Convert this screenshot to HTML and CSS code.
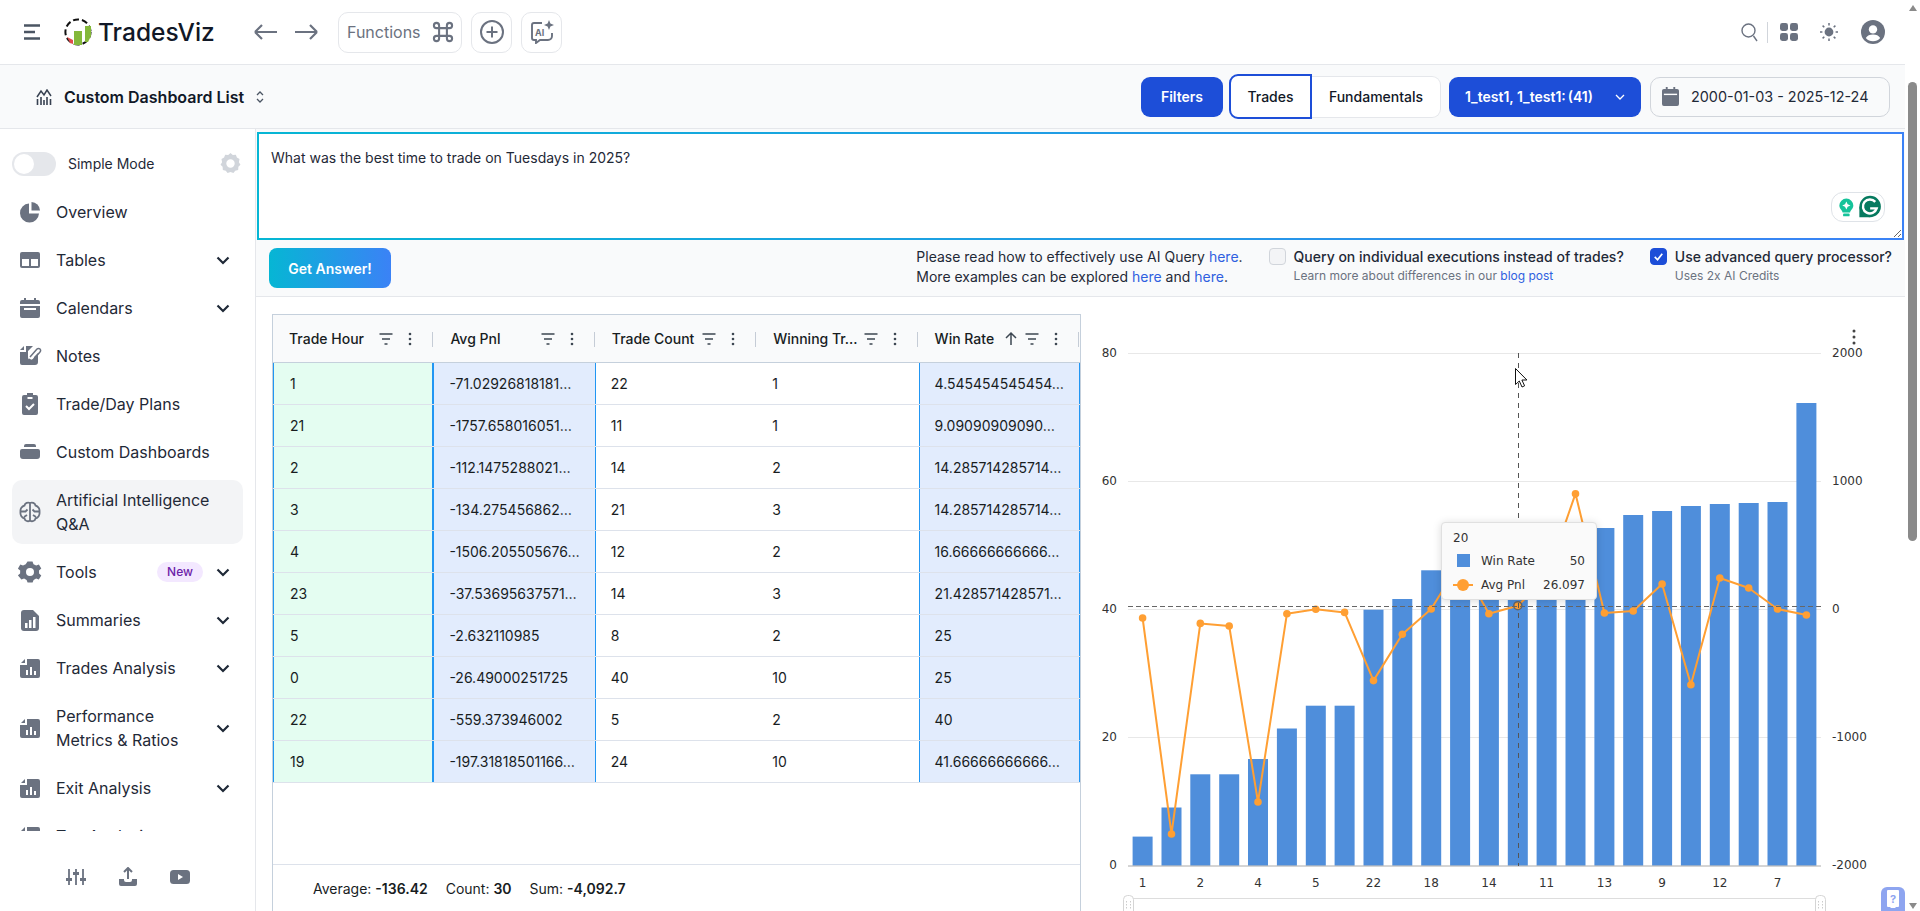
FILE: index.html
```html
<!DOCTYPE html>
<html lang="en">
<head>
<meta charset="utf-8">
<title>TradesViz</title>
<link rel="stylesheet" href="styles.css">
</head>
<body>
<svg class="defs" width="0" height="0" aria-hidden="true">
  <symbol id="i-bars" viewBox="0 0 24 24"><path fill="#6b7280" d="M3 7l4-4v4zM9 3h11a2 2 0 0 1 2 2v15a2 2 0 0 1-2 2H4a2 2 0 0 1-2-2V9h7z"/><path fill="#fff" d="M8 14h2v5H8zM12 11h2v8h-2zM16 15h2v4h-2z"/></symbol>
  <symbol id="i-chev" viewBox="0 0 16 16"><path d="M2.5 5.5L8 11l5.5-5.5" fill="none" stroke="#1f2937" stroke-width="2.2"/></symbol>
  <symbol id="i-filter" viewBox="0 0 16 16"><path d="M1.5 3h13M4 8h8M6.5 13h3" fill="none" stroke="#3d4752" stroke-width="1.7"/></symbol>
  <symbol id="i-dots" viewBox="0 0 16 16"><circle cx="8" cy="3" r="1.3" fill="#3d4752"/><circle cx="8" cy="8" r="1.3" fill="#3d4752"/><circle cx="8" cy="13" r="1.3" fill="#3d4752"/></symbol>
</svg>

<div class="page">
  <div class="main">
    <header class="topbar">
      <svg class="burger" viewBox="0 0 16 16"><path d="M0 1.5h16M0 8h11M0 14.5h16" fill="none" stroke="#4b5563" stroke-width="2.4"/></svg>
      <div class="logo">
        <svg class="logo-mark" viewBox="0 0 28 28">
          <circle cx="14" cy="14" r="12.6" fill="none" stroke="#111" stroke-width="2" stroke-dasharray="6 3"/>
          <path fill="#e14b4b" d="M3 19l6 3v4l-3-1z"/>
          <path fill="#84b83a" d="M10 13h8v14h-8z"/>
          <path fill="#84b83a" d="M21 8h6v10l-3 6h-3z"/>
        </svg>
        <span class="logo-text">TradesViz</span>
      </div>
      <svg class="arrow" viewBox="0 0 24 16"><path d="M1 8h22M1 8l7-7M1 8l7 7" fill="none" stroke="#6b7280" stroke-width="2.2"/></svg>
      <svg class="arrow arrow-r" viewBox="0 0 24 16"><path d="M1 8h22M23 8l-7-7M23 8l-7 7" fill="none" stroke="#6b7280" stroke-width="2.2"/></svg>
      <div class="tbtn tbtn-fn">
        <span>Functions</span>
        <svg class="ic24" viewBox="0 0 24 24"><path d="M7 9a2 2 0 1 1 2-2v10a2 2 0 1 1-2-2h10a2 2 0 1 1-2 2V7a2 2 0 1 1 2 2H7" transform="translate(-3.6 -3.6) scale(1.3)" fill="none" stroke="#6b7280" stroke-width="1.6"/></svg>
      </div>
      <div class="tbtn tbtn-sq">
        <svg class="ic24" viewBox="0 0 24 24"><circle cx="12" cy="12" r="11" fill="none" stroke="#6b7280" stroke-width="2"/><path d="M12 6.5v11M6.5 12h11" stroke="#6b7280" stroke-width="2"/></svg>
      </div>
      <div class="tbtn tbtn-sq">
        <svg class="ic24" viewBox="0 0 24 24"><path d="M12 3H4a2 2 0 0 0-2 2v13a2 2 0 0 0 2 2h2v3l4-3h8a4 4 0 0 0 4-4v-3" fill="none" stroke="#6b7280" stroke-width="1.9"/><path fill="#6b7280" d="M19 0l1.4 3.6L24 5l-3.6 1.4L19 10l-1.4-3.6L14 5l3.6-1.4z"/><text x="5" y="15.5" class="ai-text">AI</text></svg>
      </div>
      <div class="top-right">
        <svg class="ic-search" viewBox="0 0 17 19"><circle cx="7.5" cy="7.5" r="6.5" fill="none" stroke="#6b7280" stroke-width="1.4"/><path d="M12.5 13l3.5 5" stroke="#6b7280" stroke-width="1.4"/></svg>
        <span class="divider"></span>
        <svg class="ic-grid" viewBox="0 0 18 18"><rect width="8" height="8" rx="2.4" fill="#6b7280"/><rect x="10" width="8" height="8" rx="2.4" fill="#6b7280"/><rect y="10" width="8" height="8" rx="2.4" fill="#6b7280"/><rect x="10" y="10" width="8" height="8" rx="2.4" fill="#6b7280"/></svg>
        <svg class="ic-sun" viewBox="0 0 18 18"><circle cx="9" cy="9" r="4.4" fill="#6b7280"/><path d="M9 0v2.4M9 15.6V18M0 9h2.4M15.6 9H18M2.6 2.6l1.7 1.7M13.7 13.7l1.7 1.7M2.6 15.4l1.7-1.7M13.7 4.3l1.7-1.7" stroke="#6b7280" stroke-width="1.5"/></svg>
        <svg class="ic-user" viewBox="0 0 24 24"><circle cx="12" cy="12" r="12" fill="#6b7280"/><circle cx="12" cy="9.4" r="4.2" fill="#fff"/><path fill="#fff" d="M4.8 18c1.4-2.6 4-3.6 7.2-3.6s5.800 1 7.200 3.600c-1.800 2.100-4.400 3.300-7.200 3.300s-5.400-1.200-7.200-3.300z"/></svg>
      </div>
    </header>

    <div class="subbar">
      <svg class="ic-dash" viewBox="0 0 16 16"><path d="M1 8l4-6 3 4 3-5 4 6" fill="none" stroke="#374151" stroke-width="1.5"/><path d="M1.500 10v6M5 8v8M8 11v5M11 8v8M14.500 10v6" stroke="#374151" stroke-width="1.600"/></svg>
      <span class="dash-title">Custom Dashboard List</span>
      <svg class="ic-updown" viewBox="0 0 8 14"><path d="M1 5l3-3 3 3M1 9l3 3 3-3" fill="none" stroke="#4b5563" stroke-width="1.300"/></svg>
      <div class="sub-right">
        <button class="btn-blue btn-filters">Filters</button>
        <div class="seg">
          <span class="seg-on">Trades</span>
          <span class="seg-off">Fundamentals</span>
        </div>
        <button class="btn-blue btn-acct">
          <span class="acct-names">1_test1, 1_test1:</span>
          <span>(41)</span>
          <svg class="ic-acct-chev" viewBox="0 0 12 12"><path d="M2 4l4 4 4-4" fill="none" stroke="#fff" stroke-width="1.300"/></svg>
        </button>
        <div class="date">
          <svg class="ic-cal" viewBox="0 0 18 20"><path fill="#6b7280" d="M2 2h2V0h2v2h6V0h2v2h2a2 2 0 0 1 2 2v14a2 2 0 0 1-2 2H2a2 2 0 0 1-2-2V4a2 2 0 0 1 2-2z"/><path fill="#fff" d="M2 7h14v1.500H2z"/></svg>
          <span>2000-01-03 - 2025-12-24</span>
        </div>
      </div>
    </div>

    <div class="body">
      <aside class="side">
        <div class="simple">
          <span class="toggle"><span class="knob"></span></span>
          <span class="simple-label">Simple Mode</span>
          <svg class="ic-gear-light" viewBox="0 0 20 20"><path fill-rule="evenodd" fill="#d1d5db" d="M10 0l2.200 1.900 2.900-.3 1 2.700 2.500 1.500-.6 2.900 1.500 2.400-2 2.100-.2 2.900-2.800.8L12.800 19l-2.800-1-2.800 1-1.700-2.100-2.800-.8-.2-2.900-2-2.100 1.500-2.400-.6-2.900 2.500-1.500 1-2.700 2.900.3zM10 6a4 4 0 1 0 0 8 4 4 0 0 0 0-8z"/></svg>
        </div>
        <nav class="nav">
          <a class="item"><svg class="nav-ic" viewBox="0 0 24 24"><path fill="#6b7280" d="M11 3.500a9.500 9.500 0 1 0 10 10H11z"/><path fill="#6b7280" d="M13.500 2v8.500H22A9 9 0 0 0 13.500 2z"/></svg><span class="label">Overview</span></a>
          <a class="item"><svg class="nav-ic" viewBox="0 0 24 24"><rect x="2" y="4" width="20" height="16" rx="2" fill="#6b7280"/><rect x="4" y="11" width="7" height="7" fill="#fff"/><rect x="13" y="11" width="7" height="7" fill="#fff"/></svg><span class="label">Tables</span><svg class="chev"><use href="#i-chev"/></svg></a>
          <a class="item"><svg class="nav-ic" viewBox="0 0 24 24"><path fill="#6b7280" d="M4 4h2V2h2v2h8V2h2v2h2a2 2 0 0 1 2 2v2H2V6a2 2 0 0 1 2-2zM2 10h20v10a2 2 0 0 1-2 2H4a2 2 0 0 1-2-2z"/><rect x="6" y="12" width="12" height="2" fill="#fff"/></svg><span class="label">Calendars</span><svg class="chev"><use href="#i-chev"/></svg></a>
          <a class="item"><svg class="nav-ic" viewBox="0 0 24 24"><path fill="#6b7280" d="M2 6l4-4v4zM8 2h7l-5 5v6a3 3 0 0 0 6 0l4-4v9a3 3 0 0 1-3 3H4a2 2 0 0 1-2-2V8h6z"/><path d="M12 13l7-8a2 2 0 0 1 3 3l-7 8a3 3 0 0 1-4-1" fill="none" stroke="#6b7280" stroke-width="1.500"/></svg><span class="label">Notes</span></a>
          <a class="item"><svg class="nav-ic" viewBox="0 0 24 24"><path fill="#6b7280" d="M9 1h6v2h3a2 2 0 0 1 2 2v16a2 2 0 0 1-2 2H6a2 2 0 0 1-2-2V5a2 2 0 0 1 2-2h3z"/><rect x="9.500" y="5" width="5" height="2" fill="#fff"/><path d="M8 14l3 3 5-5" fill="none" stroke="#fff" stroke-width="2"/></svg><span class="label">Trade/Day Plans</span></a>
          <a class="item"><svg class="nav-ic" viewBox="0 0 24 24"><path fill="#6b7280" d="M6 6a2 2 0 0 1 2-2h8a2 2 0 0 1 2 2v1H6zM4 9h16a2 2 0 0 1 2 2v5a3 3 0 0 1-3 3H5a3 3 0 0 1-3-3v-5a2 2 0 0 1 2-2z"/></svg><span class="label">Custom Dashboards</span></a>
          <a class="item item-on"><svg class="nav-ic" viewBox="0 0 24 24"><path d="M12 3c-2-1-5 0-5.500 2.500C4 6 2 9 2.500 12c-.5 3 1.500 6 4 6.500C7 21 10 22 12 20.500c2 1.500 5 .5 5.500-2 2.500-.5 4.500-3.500 4-6.500.5-3-1.500-6-4-6.500C17 3 14 2 12 3zM12 3v17.500M2.500 11.500h5l2-2M21.500 11.500h-5l-2-2M6 17l3-2M18 17l-3-2" fill="none" stroke="#6b7280" stroke-width="1.800"/></svg><span class="label">Artificial Intelligence Q&amp;A</span></a>
          <a class="item"><svg class="nav-ic" viewBox="0 0 24 24"><path fill-rule="evenodd" fill="#6b7280" d="M9.500 1.500h5l1 2.800 2.700 1.100 2.700-1 2.400 4.200-2.300 2 .1 2.800 2.200 2-2.500 4.200-2.700-1-2.500 1.400-1 2.600h-5l-1-2.600-2.500-1.400-2.700 1L-.1 15.400l2.200-2 .1-2.800-2.300-2 2.400-4.200 2.700 1 2.700-1.100zM12 8a4 4 0 1 0 0 8 4 4 0 0 0 0-8z"/></svg><span class="label">Tools</span><span class="badge">New</span><svg class="chev"><use href="#i-chev"/></svg></a>
          <a class="item"><svg class="nav-ic" viewBox="0 0 24 24"><path fill="#6b7280" d="M6 2h9l6 6v12a3 3 0 0 1-3 3H6a3 3 0 0 1-3-3V5a3 3 0 0 1 3-3z"/><path fill="#fff" d="M7 15h2.500v5H7zM11 12h2.500v8H11zM15 9h2.500v11H15z"/></svg><span class="label">Summaries</span><svg class="chev"><use href="#i-chev"/></svg></a>
          <a class="item"><svg class="nav-ic"><use href="#i-bars"/></svg><span class="label">Trades Analysis</span><svg class="chev"><use href="#i-chev"/></svg></a>
          <a class="item"><svg class="nav-ic"><use href="#i-bars"/></svg><span class="label">Performance Metrics &amp; Ratios</span><svg class="chev"><use href="#i-chev"/></svg></a>
          <a class="item"><svg class="nav-ic"><use href="#i-bars"/></svg><span class="label">Exit Analysis</span><svg class="chev"><use href="#i-chev"/></svg></a>
          <a class="item"><svg class="nav-ic"><use href="#i-bars"/></svg><span class="label">Tag Analysis</span><svg class="chev"><use href="#i-chev"/></svg></a>
        </nav>
        <div class="side-foot">
          <svg class="foot-ic" viewBox="0 0 20 20"><path d="M3 2v16M10 2v16M17 2v16" stroke="#6b7280" stroke-width="1.800"/><path fill="#6b7280" d="M0 11h6v3H0zM7 5h6v3H7zM14 11h6v3h-6z"/></svg>
          <svg class="foot-ic" viewBox="0 0 20 20"><path fill="#6b7280" d="M1 12h5v1a2 2 0 0 0 2 2h4a2 2 0 0 0 2-2v-1h5v5a2 2 0 0 1-2 2H3a2 2 0 0 1-2-2z"/><path d="M10 12V2M6 5l4-4 4 4" fill="none" stroke="#6b7280" stroke-width="2"/></svg>
          <svg class="foot-ic" viewBox="0 0 20 20"><rect y="3" width="20" height="14" rx="3.500" fill="#6b7280"/><path fill="#fff" d="M8 7l5 3-5 3z"/></svg>
        </div>
      </aside>

      <section class="content">
        <div class="ask">
          <textarea class="query" spellcheck="false">What was the best time to trade on Tuesdays in 2025?</textarea>
          <div class="gram">
            <svg class="gram-ic" viewBox="0 0 54 30">
              <path fill="#15c39a" d="M14.500 6a7.500 7.500 0 0 1 7.500 7.500c0 3.500-3 4.500-3.500 7.500h-8c-.5-3-3.500-4-3.500-7.500A7.500 7.500 0 0 1 14.500 6z"/>
              <path fill="#fff" d="M14.500 9l1.400 3 3 1.400-3 1.400-1.400 3-1.400-3-3-1.400 3-1.400z"/>
              <rect x="11" y="22" width="7" height="3" rx="1" fill="#15c39a"/>
              <circle cx="40" cy="14.500" r="11.500" fill="#067a5f"/>
              <path d="M28.500 14.500V26h11.500z" fill="#067a5f"/>
              <path d="M45.500 9.500a7.500 7.500 0 1 0 1.500 7h-7" fill="none" stroke="#fff" stroke-width="2.600"/>
            </svg>
          </div>
        </div>
        <div class="actions">
          <button class="answer">Get Answer!</button>
          <div class="opts">
            <p class="help">Please read how to effectively use AI Query <a>here</a>.<br>More examples can be explored <a>here</a> and <a>here</a>.</p>
            <div class="opt">
              <span class="cb"></span>
              <div class="opt-txt">
                <div class="opt-main">Query on individual executions instead of trades?</div>
                <small>Learn more about differences in our <a>blog post</a></small>
              </div>
            </div>
            <div class="opt">
              <span class="cb cb-on"><svg viewBox="0 0 16 16"><path d="M4 8.500l3 3 5-6.500" fill="none" stroke="#fff" stroke-width="1.800"/></svg></span>
              <div class="opt-txt">
                <div class="opt-main">Use advanced query processor?</div>
                <small>Uses 2x AI Credits</small>
              </div>
            </div>
          </div>
        </div>

        <div class="result">
          <div class="grid">
            <div class="g-head">
              <div class="hc"><span class="hl">Trade Hour</span><svg class="hi"><use href="#i-filter"/></svg><svg class="hi"><use href="#i-dots"/></svg></div>
              <div class="hc"><span class="hl">Avg Pnl</span><svg class="hi"><use href="#i-filter"/></svg><svg class="hi"><use href="#i-dots"/></svg></div>
              <div class="hc"><span class="hl">Trade Count</span><svg class="hi"><use href="#i-filter"/></svg><svg class="hi"><use href="#i-dots"/></svg></div>
              <div class="hc"><span class="hl">Winning Tr…</span><svg class="hi"><use href="#i-filter"/></svg><svg class="hi"><use href="#i-dots"/></svg></div>
              <div class="hc"><span class="hl">Win Rate</span><svg class="hi hi-sort" viewBox="0 0 16 16"><path d="M8 14V2M3 7l5-5 5 5" fill="none" stroke="#3d4752" stroke-width="1.500"/></svg><svg class="hi"><use href="#i-filter"/></svg><svg class="hi"><use href="#i-dots"/></svg></div>
            </div>
            <div class="g-row"><div class="c c-g">1</div><div class="c c-b">-71.02926818181…</div><div class="c">22</div><div class="c">1</div><div class="c c-b c-l">4.545454545454…</div></div>
            <div class="g-row"><div class="c c-g">21</div><div class="c c-b">-1757.658016051…</div><div class="c">11</div><div class="c">1</div><div class="c c-b c-l">9.09090909090…</div></div>
            <div class="g-row"><div class="c c-g">2</div><div class="c c-b">-112.1475288021…</div><div class="c">14</div><div class="c">2</div><div class="c c-b c-l">14.285714285714…</div></div>
            <div class="g-row"><div class="c c-g">3</div><div class="c c-b">-134.275456862…</div><div class="c">21</div><div class="c">3</div><div class="c c-b c-l">14.285714285714…</div></div>
            <div class="g-row"><div class="c c-g">4</div><div class="c c-b">-1506.205505676…</div><div class="c">12</div><div class="c">2</div><div class="c c-b c-l">16.66666666666…</div></div>
            <div class="g-row"><div class="c c-g">23</div><div class="c c-b">-37.53695637571…</div><div class="c">14</div><div class="c">3</div><div class="c c-b c-l">21.428571428571…</div></div>
            <div class="g-row"><div class="c c-g">5</div><div class="c c-b">-2.632110985</div><div class="c">8</div><div class="c">2</div><div class="c c-b c-l">25</div></div>
            <div class="g-row"><div class="c c-g">0</div><div class="c c-b">-26.49000251725</div><div class="c">40</div><div class="c">10</div><div class="c c-b c-l">25</div></div>
            <div class="g-row"><div class="c c-g">22</div><div class="c c-b">-559.373946002</div><div class="c">5</div><div class="c">2</div><div class="c c-b c-l">40</div></div>
            <div class="g-row"><div class="c c-g">19</div><div class="c c-b">-197.31818501166…</div><div class="c">24</div><div class="c">10</div><div class="c c-b c-l">41.66666666666…</div></div>
            <div class="g-foot"><span>Average: <b>-136.42</b></span><span>Count: <b>30</b></span><span>Sum: <b>-4,092.7</b></span></div>
          </div>

          <div class="chart">
            <svg class="plot" viewBox="1082 297 823 614">
              <g class="gridlines">
                <path d="M1128 353.500H1821M1128 481.500H1821M1128 609.500H1821M1128 737.500H1821"/>
              </g>
              <g class="ylab ylab-l">
                <text x="1117" y="357">80</text><text x="1117" y="485">60</text><text x="1117" y="613">40</text><text x="1117" y="741">20</text><text x="1117" y="869">0</text>
              </g>
              <g class="ylab">
                <text x="1832" y="357">2000</text><text x="1832" y="485">1000</text><text x="1832" y="613">0</text><text x="1832" y="741">-1000</text><text x="1832" y="869">-2000</text>
              </g>
              <g class="bars">
                <rect x="1132.600" y="836.600" width="20" height="29.100"/>
                <rect x="1161.500" y="807.500" width="20" height="58.200"/>
                <rect x="1190.300" y="774.300" width="20" height="91.400"/>
                <rect x="1219.200" y="774.300" width="20" height="91.400"/>
                <rect x="1248" y="759" width="20" height="106.700"/>
                <rect x="1276.900" y="728.500" width="20" height="137.200"/>
                <rect x="1305.800" y="705.700" width="20" height="160"/>
                <rect x="1334.600" y="705.700" width="20" height="160"/>
                <rect x="1363.500" y="609.700" width="20" height="256"/>
                <rect x="1392.300" y="599" width="20" height="266.700"/>
                <rect x="1421.200" y="570.300" width="20" height="295.400"/>
                <rect x="1450.100" y="565" width="20" height="300.700"/>
                <rect x="1478.900" y="558.500" width="20" height="307.200"/>
                <rect x="1507.800" y="545.700" width="20" height="320"/>
                <rect x="1536.600" y="539" width="20" height="326.700"/>
                <rect x="1565.500" y="535" width="20" height="330.700"/>
                <rect x="1594.400" y="528" width="20" height="337.700"/>
                <rect x="1623.200" y="515" width="20" height="350.700"/>
                <rect x="1652.100" y="511" width="20" height="354.700"/>
                <rect x="1680.900" y="506" width="20" height="359.700"/>
                <rect x="1709.800" y="504" width="20" height="361.700"/>
                <rect x="1738.700" y="503" width="20" height="362.700"/>
                <rect x="1767.500" y="502" width="20" height="363.700"/>
                <rect x="1796.400" y="403" width="20" height="462.700"/>
              </g>
              <path class="axis" d="M1128 866H1821"/>
              <g class="xlab">
                <text x="1142.600" y="887">1</text><text x="1200.300" y="887">2</text><text x="1258" y="887">4</text><text x="1315.800" y="887">5</text><text x="1373.500" y="887">22</text><text x="1431.200" y="887">18</text><text x="1488.900" y="887">14</text><text x="1546.600" y="887">11</text><text x="1604.400" y="887">13</text><text x="1662.100" y="887">9</text><text x="1719.800" y="887">12</text><text x="1777.500" y="887">7</text>
              </g>
              <polyline class="line" points="1142.600,618 1171.500,834 1200.300,623.400 1229.200,626 1258,802 1286.900,613.800 1315.800,609.300 1344.600,612.400 1373.500,680.600 1402.300,634.300 1431.200,609 1460.100,562 1488.900,613.700 1517.800,605.700 1546.600,577 1575.500,493.700 1604.400,613 1633.200,611 1662.100,584 1690.900,684.700 1719.800,578 1748.700,588 1777.500,609 1806.400,615"/>
              <g class="dots">
                <circle cx="1142.600" cy="618" r="3.800"/><circle cx="1171.500" cy="834" r="3.800"/><circle cx="1200.300" cy="623.400" r="3.800"/><circle cx="1229.200" cy="626" r="3.800"/><circle cx="1258" cy="802" r="3.800"/><circle cx="1286.900" cy="613.800" r="3.800"/><circle cx="1315.800" cy="609.300" r="3.800"/><circle cx="1344.600" cy="612.400" r="3.800"/><circle cx="1373.500" cy="680.600" r="3.800"/><circle cx="1402.300" cy="634.300" r="3.800"/><circle cx="1431.200" cy="609" r="3.800"/><circle cx="1460.100" cy="562" r="3.800"/><circle cx="1488.900" cy="613.700" r="3.800"/><circle cx="1546.600" cy="577" r="3.800"/><circle cx="1575.500" cy="493.700" r="3.800"/><circle cx="1604.400" cy="613" r="3.800"/><circle cx="1633.200" cy="611" r="3.800"/><circle cx="1662.100" cy="584" r="3.800"/><circle cx="1690.900" cy="684.700" r="3.800"/><circle cx="1719.800" cy="578" r="3.800"/><circle cx="1748.700" cy="588" r="3.800"/><circle cx="1777.500" cy="609" r="3.800"/><circle cx="1806.400" cy="615" r="3.800"/>
              </g>
              <circle class="hover-dot" cx="1517.800" cy="605.700" r="4"/>
              <path class="cross-v" d="M1518.500 353V866"/>
              <path class="cross-h" d="M1128 606.500H1821"/>
              <g class="slider">
                <path d="M1128 898.500H1821"/>
                <rect x="1123.500" y="895.500" width="10" height="22" rx="4"/>
                <rect x="1815.500" y="895.500" width="10" height="22" rx="4"/>
                <path class="grip" d="M1126.500 901v8M1130.500 901v8M1818.500 901v8M1822.500 901v8"/>
              </g>
              <g class="more"><circle cx="1854" cy="331" r="1.500"/><circle cx="1854" cy="337" r="1.500"/><circle cx="1854" cy="343" r="1.500"/></g>
              <path class="cursor" d="M1515.500 368.500v16l3.800-3.500 2.700 6 2.600-1.200-2.700-5.800h5z"/>
            </svg>
            <div class="tip">
              <div class="tip-h">20</div>
              <div class="tip-r"><span class="tk tk-sq"></span><span class="tl">Win Rate</span><span class="tv">50</span></div>
              <div class="tip-r"><svg class="tk" viewBox="0 0 20 14"><path d="M0 7h20" stroke="#ff9f33" stroke-width="2"/><circle cx="10" cy="7" r="6" fill="#ff9f33"/></svg><span class="tl">Avg Pnl</span><span class="tv">26.097</span></div>
            </div>
          </div>
        </div>
      </section>
    </div>
  </div>

  <div class="scroll">
    <span class="tri-up"></span>
    <span class="thumb"></span>
    <span class="tri-down"></span>
  </div>
  <div class="helpme"><svg viewBox="0 0 12 18"><path fill="#fff" d="M1 0h10a1 1 0 0 1 1 1v15a1 1 0 0 1-1 1h-2l-1 1H4l-1-1H1a1 1 0 0 1-1-1V1a1 1 0 0 1 1-1z"/><text x="3" y="12.500" class="help-q">?</text></svg></div>
</div>
</body>
</html>
```

FILE: styles.css
```css
* { box-sizing: border-box; }
html, body { margin: 0; height: 911px; overflow: hidden; background: #fff; }
body { font-family: Inter, "Liberation Sans", sans-serif; color: #1f2937; }
.defs { position: absolute; }
p { margin: 0; }
a { color: #2f5fe0; }
button { font-family: inherit; border: 0; cursor: pointer; }

.page { display: flex; height: 911px; position: relative; }
.main { width: 1905px; flex: none; display: flex; flex-direction: column; height: 911px; }

/* top bar */
.topbar { height: 65px; border-bottom: 1px solid #e5e7eb; display: flex; align-items: center; padding-left: 24px; flex: none; }
.burger { width: 16px; height: 16px; flex: none; }
.logo { display: flex; align-items: center; gap: 6px; margin-left: 24px; width: 190px; }
.logo-mark { width: 28px; height: 28px; flex: none; }
.logo-text { font-size: 24.5px; font-weight: 500; color: #111827; line-height: 1; }
.arrow { width: 24px; height: 16px; flex: none; }
.arrow-r { margin-left: 16px; }
.tbtn { height: 41px; border: 1px solid #e5e7eb; border-radius: 10px; display: flex; align-items: center; justify-content: center; margin-left: 9px; flex: none; background: #fff; }
.tbtn-fn { width: 124px; margin-left: 20px; justify-content: space-between; padding: 0 6px 0 8px; font-size: 16px; color: #6b7280; }
.tbtn-sq { width: 41px; }
.ic24 { width: 24px; height: 24px; flex: none; }
.ai-text { font: 700 9px Inter, sans-serif; fill: #6b7280; }
.top-right { margin-left: auto; display: flex; align-items: center; padding-right: 20px; }
.ic-search { width: 17px; height: 19px; }
.divider { width: 1.500px; height: 21px; background: #d1d5db; margin: 0 12px 0 9px; }
.ic-grid { width: 18px; height: 18px; }
.ic-sun { width: 18px; height: 18px; margin-left: 22px; }
.ic-user { width: 24px; height: 24px; margin-left: 23px; }

/* sub bar */
.subbar { height: 64px; background: #f9fafb; border-bottom: 1px solid #e5e7eb; display: flex; align-items: center; padding-left: 36px; flex: none; }
.ic-dash { width: 16px; height: 16px; flex: none; }
.dash-title { margin-left: 12px; font-size: 16px; font-weight: 600; color: #111827; }
.ic-updown { width: 8px; height: 14px; margin-left: 12px; }
.sub-right { margin-left: auto; display: flex; align-items: center; padding-right: 15px; }
.btn-blue { background: #1d4ed8; color: #fff; height: 40px; border-radius: 9px; font-size: 14px; font-weight: 600; flex: none; }
.btn-filters { width: 82px; }
.seg { display: flex; align-items: center; margin-left: 6px; font-size: 14px; font-weight: 500; color: #111827; }
.seg-on { width: 83px; height: 45px; border: 2px solid #1d4ed8; border-radius: 9px 0 0 9px; display: flex; align-items: center; justify-content: center; background: #fff; }
.seg-off { width: 129px; height: 42px; border: 1px solid #e5e7eb; border-left: 0; border-radius: 0 9px 9px 0; display: flex; align-items: center; justify-content: center; background: #fff; }
.btn-acct { width: 192px; margin-left: 8px; display: flex; align-items: center; padding: 0 16px; }
.acct-names { white-space: nowrap; margin-right: 2px; text-align: left; flex: none; }
.ic-acct-chev { width: 12px; height: 12px; margin-left: auto; margin-right: -1px; }
.date { width: 240px; height: 40px; margin-left: 9px; border: 1px solid #d1d5db; border-radius: 10px; display: flex; align-items: center; padding-left: 11px; font-size: 14.4px; color: #1f2937; }
.ic-cal { width: 17px; height: 19px; margin-right: 12px; flex: none; }

/* body */
.body { flex: 1; display: flex; min-height: 0; }
.side { width: 256px; flex: none; border-right: 1px solid #e5e7eb; display: flex; flex-direction: column; height: 782px; }
.simple { display: flex; align-items: center; padding: 23px 14px 0 12px; height: 46px; }
.toggle { width: 44px; height: 24px; border-radius: 12px; background: #e5e7eb; display: block; padding: 2px; flex: none; }
.knob { display: block; width: 20px; height: 20px; border-radius: 50%; background: #fff; }
.simple-label { margin-left: 12px; font-size: 14px; color: #1f2937; flex: 1; }
.ic-gear-light { width: 21px; height: 21px; flex: none; }
.nav { height: 639px; margin-top: 17px; overflow: hidden; padding: 0 12px; display: flex; flex-direction: column; gap: 8px; }
.item { display: flex; align-items: center; min-height: 40px; padding: 8px 12px 8px 6px; border-radius: 10px; font-size: 16px; line-height: 24px; color: #1f2937; flex: none; }
.item-on { background: #f3f4f6; }
.nav-ic { width: 24px; height: 24px; flex: none; margin-right: 14px; }
.label { flex: 1; min-width: 0; }
.chev { width: 16px; height: 16px; flex: none; margin-left: 8px; }
.badge { background: #f3e8ff; color: #6b21a8; font-size: 12px; font-weight: 500; line-height: 20px; width: 46px; text-align: center; border-radius: 10px; margin-right: 4px; }
.side-foot { flex: 1; display: flex; justify-content: center; align-items: center; gap: 32px; padding-top: 12px; }
.foot-ic { width: 20px; height: 20px; }

/* content */
.content { flex: 1; min-width: 0; display: flex; flex-direction: column; height: 782px; }
.ask { position: relative; padding: 3px 0 0 1px; background: #f9fafb; flex: none; }
.query { display: block; width: 1647px; height: 108px; border: 2px solid; border-image: linear-gradient(to right, #06b6d4, #3b82f6) 1; padding: 12px; font: 14px/24px Inter, sans-serif; color: #1f2937; background: #fff; outline: 0; margin: 0; resize: both; }
.gram { position: absolute; left: 1575px; top: 63px; width: 54px; height: 30px; border: 1px solid #dfe3e8; border-radius: 12px; background: #fff; }
.gram-ic { display: block; width: 52px; height: 28px; }
.actions { height: 57px; flex: none; background: #f9fafb; border-bottom: 1px solid #e5e7eb; display: flex; align-items: center; justify-content: space-between; padding: 0 13px 0 13px; }
.answer { width: 122px; height: 40px; border-radius: 8px; background: linear-gradient(to right, #06b6d4, #3b82f6); color: #fff; font-size: 14px; font-weight: 600; }
.opts { display: flex; gap: 26px; align-items: flex-start; font-size: 14px; line-height: 20px; color: #1f2937; margin-top: -2px; }
.opt { display: flex; gap: 8px; align-items: flex-start; }
.opt-main { font-weight: 500; }
.cb { width: 17px; height: 17px; border: 1px solid #d1d5db; border-radius: 4px; background: #f3f4f6; flex: none; margin-top: 1px; display: block; }
.cb-on { background: #1d4ed8; border-color: #1d4ed8; }
.cb-on svg { display: block; width: 15px; height: 15px; }
.opt-txt small { display: block; font-size: 12px; line-height: 16px; margin-top: 1px; color: #6b7280; }

/* result */
.result { flex: 1; min-height: 0; display: flex; position: relative; }
.grid { width: 809px; flex: none; margin: 17px 0 0 16px; border: 1px solid #c5d0dc; border-bottom-color: #dde2eb; display: flex; flex-direction: column; height: 598px; background: #fff; font-size: 14px; color: #181d1f; }
.g-head { display: grid; grid-template-columns: repeat(5, minmax(0, 1fr)); height: 48px; background: #f9fafb; border-bottom: 1px solid #c5d0dc; flex: none; }
.hc { display: flex; align-items: center; padding: 0 16px 0 16px; position: relative; font-weight: 500; color: #181d1f; min-width: 0; }
.hc::after { content: ""; position: absolute; right: 1px; top: 17px; height: 15px; width: 1px; background: #c5ccd6; }
.hl { flex: 1; min-width: 0; white-space: nowrap; }
.hi { width: 16px; height: 16px; flex: none; margin-left: 8px; }
.hl + .hi { margin-left: 2px; }
.hi-sort { margin-right: -3px; }
.g-row { display: grid; grid-template-columns: repeat(5, minmax(0, 1fr)); height: 42px; flex: none; border-bottom: 1px solid #dde2eb; }
.c { height: 41px; padding: 0 8px 0 15px; line-height: 42px; white-space: nowrap; min-width: 0; }
.c:nth-child(1) { padding-left: 16px; }
.c-g { background: #e4fdf1; border-left: 1px solid #2196f3; border-right: 2px solid #2196f3; }
.c-b { background: #e2ecfd; }
.c-b:not(.c-l) { border-right: 1px solid #2196f3; }
.c-l { border-left: 1px solid #2196f3; border-right: 1px solid #2196f3; }
.g-foot { margin-top: auto; height: 47px; border-top: 1px solid #dde2eb; display: flex; align-items: center; gap: 18px; padding-left: 40px; flex: none; }
.g-foot b { font-weight: 600; }

/* chart */
.chart { flex: 1; min-width: 0; position: relative; }
.plot { position: absolute; left: 1px; top: 0; width: 823px; height: 614px; display: block; }
.gridlines path { stroke: #e8e8e8; stroke-width: 1; fill: none; }
.ylab text, .xlab text { font: 12px "DejaVu Sans", sans-serif; fill: #333; }
.ylab-l text { text-anchor: end; }
.xlab text { text-anchor: middle; }
.bars rect { fill: #4f8edb; }
.axis { stroke: #aaa; stroke-width: 1; fill: none; }
.line { fill: none; stroke: #ff9f33; stroke-width: 2; stroke-linejoin: round; }
.dots circle { fill: #ff9f33; }
.hover-dot { fill: #ff9f33; stroke: #666; stroke-width: 1.500; }
.cross-v { stroke: #555; stroke-width: 1; stroke-dasharray: 5 5; fill: none; }
.cross-h { stroke: #666; stroke-width: 1; stroke-dasharray: 5 3; fill: none; }
.slider path { stroke: #ddd; stroke-width: 1; fill: none; }
.slider rect { fill: #fff; stroke: #d5d5d5; stroke-width: 1; }
.slider .grip { stroke: #ccc; stroke-dasharray: 1.500 1.500; }
.more circle { fill: #444; }
.cursor { fill: #fff; stroke: #111; stroke-width: 1; }
.tip { position: absolute; left: 360px; top: 225px; width: 156px; height: 78px; background: #fafafa; border: 1px solid #e0e0e0; border-radius: 4px; box-shadow: 0 1px 8px rgba(0,0,0,.15); padding: 6px 11px; font: 12px/18px "DejaVu Sans", sans-serif; color: #333; }
.tip-h { line-height: 18px; }
.tip-r { display: flex; align-items: center; height: 23px; margin-top: 1px; }
.tip-r:nth-child(2) { margin-top: 2px; }
.tk { width: 20px; height: 14px; flex: none; display: block; }
.tk-sq { background: #4f8edb; width: 13px; height: 13px; margin: 0 3px 0 4px; }
.tl { margin-left: 8px; flex: 1; }
.tv { text-align: right; }

/* scrollbar */
.scroll { width: 15px; flex: none; height: 911px; display: flex; flex-direction: column; align-items: center; background: #fff; }
.tri-up { width: 0; height: 0; border-left: 4.500px solid transparent; border-right: 4.500px solid transparent; border-bottom: 6px solid #8a8a8a; margin: 5px 0 0; }
.thumb { width: 9px; height: 459px; background: #8a8a8a; border-radius: 4.500px; margin-top: 71px; }
.tri-down { width: 0; height: 0; border-left: 4.500px solid transparent; border-right: 4.500px solid transparent; border-top: 6px solid #8a8a8a; margin-top: 362px; }
.helpme { position: absolute; left: 1881px; top: 887px; width: 24px; height: 24px; background: #8ea5f0; border-radius: 6px 6px 0 0; display: flex; align-items: center; justify-content: center; }
.helpme svg { width: 12px; height: 18px; }
.help-q { font: 700 11px Inter, sans-serif; fill: #8ea5f0; }
```
